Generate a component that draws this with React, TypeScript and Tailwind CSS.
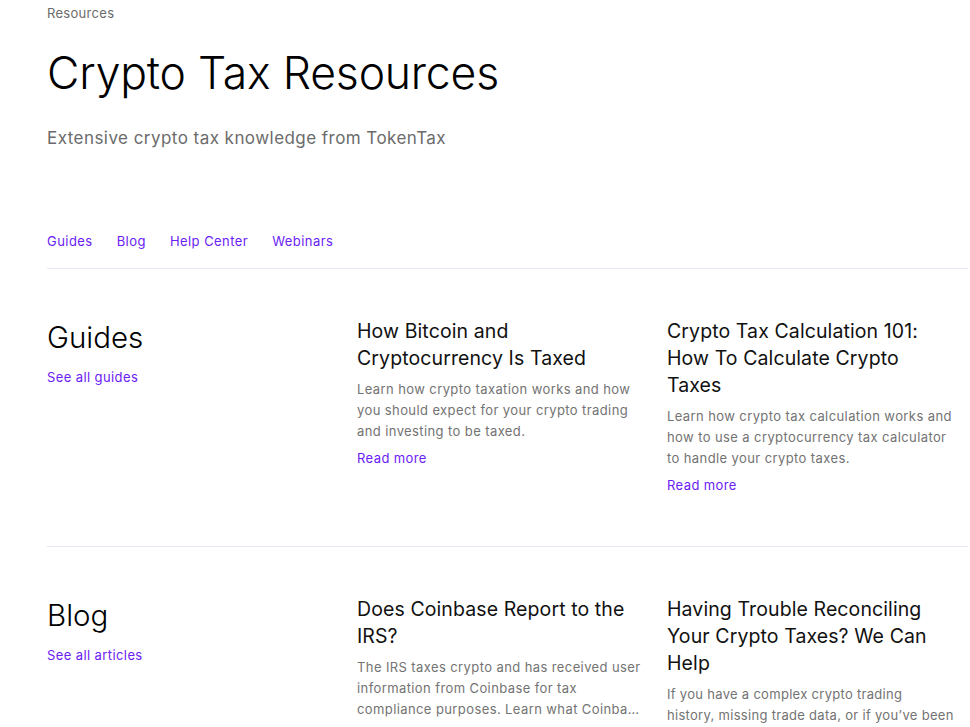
import React from "react";

type Article = {
    title: string;
    excerpt: string;
    readMore?: boolean;
    tight?: boolean;
};

type Section = {
    name: string;
    linkLabel: string;
    articles: Article[];
};

const sections: Section[] = [
    {
        name: "Guides",
        linkLabel: "See all guides",
        articles: [
            {
                title: "How Bitcoin and Cryptocurrency Is Taxed",
                excerpt:
                    "Learn how crypto taxation works and how you should expect for your crypto trading and investing to be taxed.",
                readMore: true,
            },
            {
                title: "Crypto Tax Calculation 101: How To Calculate Crypto Taxes",
                excerpt:
                    "Learn how crypto tax calculation works and how to use a cryptocurrency tax calculator to handle your crypto taxes.",
                readMore: true,
            },
        ],
    },
    {
        name: "Blog",
        linkLabel: "See all articles",
        articles: [
            {
                title: "Does Coinbase Report to the IRS?",
                // excerpt is cut off by the site itself
                excerpt:
                    "The IRS taxes crypto and has received user information from Coinbase for tax compliance purposes. Learn what Coinba\u2026",
            },
            {
                title: "Having Trouble Reconciling Your Crypto Taxes? We Can Help",
                excerpt:
                    "If you have a complex crypto trading\nhistory, missing trade data, or if you\u2019ve been struggling to reconcile your transactions, our team can help.",
                tight: true,
            },
        ],
    },
];

const tabs = ["Guides", "Blog", "Help Center", "Webinars"];

function ArticleCard({ article }: { article: Article }) {
    return (
        <div className="w-[290px]">
            <h3 className="text-[19.5px] leading-[27px] tracking-[0.1px] text-[#111]">{article.title}</h3>
            <p
                className={`mt-[7px] text-[13px] leading-[21px] text-[#737373] ${
                    article.tight ? "whitespace-pre-line tracking-[0.3px]" : "tracking-[0.4px]"
                } ${article.readMore ? "" : "line-clamp-3"}`}
            >
                {article.excerpt}
            </p>
            {article.readMore ? (
                <a href="#" className="mt-[6px] block text-[13px] leading-[21px] tracking-[0.4px] text-[#6b21f5]">
                    Read more
                </a>
            ) : null}
        </div>
    );
}

export default function App() {
    return (
        <div className="min-h-screen overflow-hidden bg-white font-['Inter','Noto_Sans',sans-serif] text-[#111]">
            <div className="ml-[47px] w-[921px]">
                <p className="pt-[4px] text-[13px] leading-[18px] tracking-[0.3px] text-[#6b6b6b]">Resources</p>
                <h1 className="mt-[23px] text-[44.5px] font-light leading-[56px] tracking-[-0.2px] text-black">
                    Crypto Tax Resources
                </h1>
                <p className="mt-[25px] text-[17px] leading-[24px] tracking-[0.45px] text-[#6b6b6b]">
                    Extensive crypto tax knowledge from TokenTax
                </p>

                <nav className="mt-[81px] flex gap-[24px] border-b border-[#e3e8f3] pb-[17px]">
                    {tabs.map((tab) => (
                        <a key={tab} href="#" className="text-[13px] leading-[20px] tracking-[0.45px] text-[#6b21f5]">
                            {tab}
                        </a>
                    ))}
                </nav>

                {sections.map((section, i) => (
                    <section
                        key={section.name}
                        className={`grid grid-cols-[310px_310px_301px] pt-[49px] ${
                            i === 0 ? "border-b border-[#e3e8f3] pb-[50px]" : ""
                        }`}
                    >
                        <div className="pt-[1px]">
                            <h2 className="text-[29.5px] font-light leading-[36px] text-black">{section.name}</h2>
                            <a
                                href="#"
                                className="mt-[12px] block text-[13px] leading-[20px] tracking-[0.4px] text-[#6b21f5]"
                            >
                                {section.linkLabel}
                            </a>
                        </div>
                        {section.articles.map((article) => (
                            <ArticleCard key={article.title} article={article} />
                        ))}
                    </section>
                ))}
            </div>
        </div>
    );
}
